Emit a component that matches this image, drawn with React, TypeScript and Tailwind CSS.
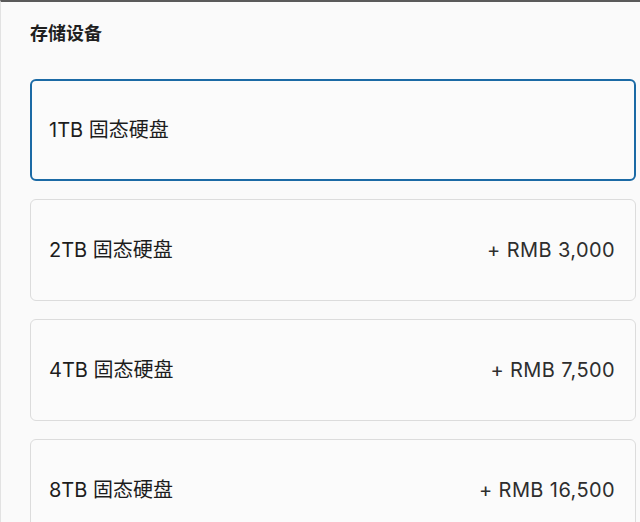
const options = [
  { label: "1TB 固态硬盘", price: "" },
  { label: "2TB 固态硬盘", price: "+ RMB 3,000" },
  { label: "4TB 固态硬盘", price: "+ RMB 7,500" },
  { label: "8TB 固态硬盘", price: "+ RMB 16,500" },
]

const App = () => {
  const selected = 0
  return (
    <div
      className="w-[640px] h-[522px] overflow-hidden bg-[#fafafa] border-t-2 border-t-[#5a5a5a] border-l border-l-[#e2e2e2] pl-[29px] pr-[4px] text-[#1f1f1f]"
      style={{ fontFamily: 'Inter, "Noto Sans CJK SC", sans-serif' }}
    >
      <h2 className="mt-[20px] text-[18px] leading-[24px] font-semibold">存储设备</h2>
      <ul className="mt-[33px] flex flex-col gap-[18px]">
        {options.map((opt, index) => (
          <li
            key={index}
            className={
              index === selected
                ? "h-[102px] shrink-0 flex items-center justify-between rounded-[6px] border-2 border-[#1b6aa5] bg-[#fbfbfb] pl-[17px] pr-[19px]"
                : "h-[102px] shrink-0 flex items-center justify-between rounded-[6px] border border-[#dcdcdc] bg-[#fbfbfb] pl-[18px] pr-[20px]"
            }
          >
            <span className="text-[20px] text-[#1d1d1d]">{opt.label}</span>
            <span className="text-[20px] tracking-[0.02em] text-[#2e2e2e]">{opt.price}</span>
          </li>
        ))}
      </ul>
    </div>
  )
}

export default App
